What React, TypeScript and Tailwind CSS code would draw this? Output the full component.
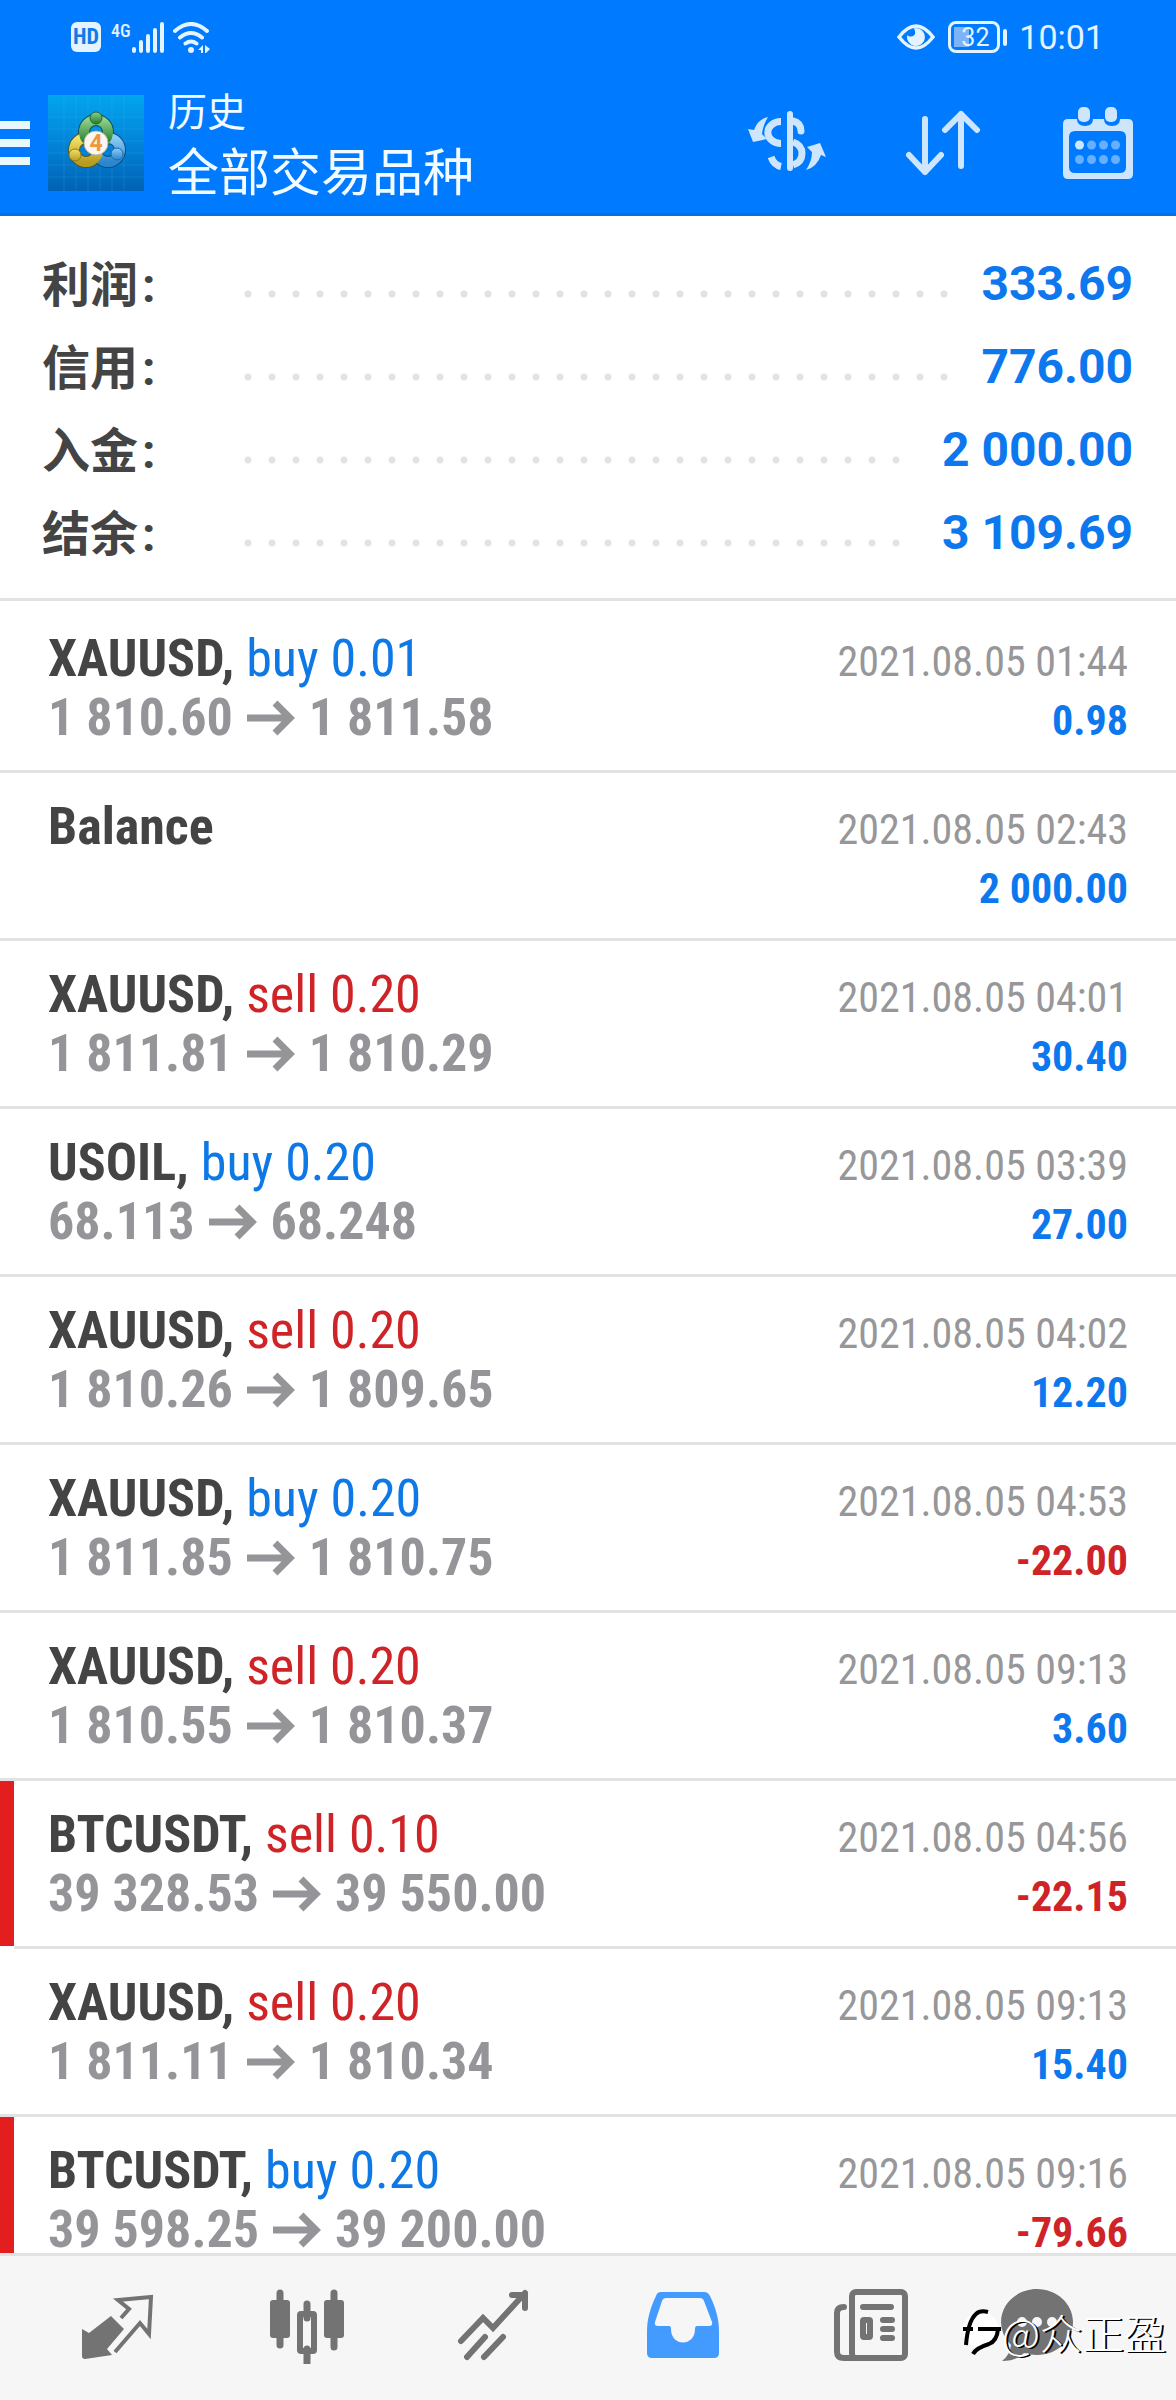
import type { ReactNode } from "react";

type Deal = {
  title: string;
  side?: "buy" | "sell";
  volume?: string;
  from?: string;
  to?: string;
  time: string;
  profit: string;
  marked?: boolean;
};

const summary = [
  { label: "利润", value: "333.69" },
  { label: "信用", value: "776.00" },
  { label: "入金", value: "2 000.00" },
  { label: "结余", value: "3 109.69" },
];

const deals: Deal[] = [
  { title: "XAUUSD", side: "buy", volume: "0.01", from: "1 810.60", to: "1 811.58", time: "2021.08.05 01:44", profit: "0.98" },
  { title: "Balance", time: "2021.08.05 02:43", profit: "2 000.00" },
  { title: "XAUUSD", side: "sell", volume: "0.20", from: "1 811.81", to: "1 810.29", time: "2021.08.05 04:01", profit: "30.40" },
  { title: "USOIL", side: "buy", volume: "0.20", from: "68.113", to: "68.248", time: "2021.08.05 03:39", profit: "27.00" },
  { title: "XAUUSD", side: "sell", volume: "0.20", from: "1 810.26", to: "1 809.65", time: "2021.08.05 04:02", profit: "12.20" },
  { title: "XAUUSD", side: "buy", volume: "0.20", from: "1 811.85", to: "1 810.75", time: "2021.08.05 04:53", profit: "-22.00" },
  { title: "XAUUSD", side: "sell", volume: "0.20", from: "1 810.55", to: "1 810.37", time: "2021.08.05 09:13", profit: "3.60" },
  { title: "BTCUSDT", side: "sell", volume: "0.10", from: "39 328.53", to: "39 550.00", time: "2021.08.05 04:56", profit: "-22.15", marked: true },
  { title: "XAUUSD", side: "sell", volume: "0.20", from: "1 811.11", to: "1 810.34", time: "2021.08.05 09:13", profit: "15.40" },
  { title: "BTCUSDT", side: "buy", volume: "0.20", from: "39 598.25", to: "39 200.00", time: "2021.08.05 09:16", profit: "-79.66", marked: true },
];

function StatusBar() {
  return (
    <div className="flex h-[74px] items-center justify-between pl-[71px] pr-[72px] text-[#e3f3ff]">
      <div className="flex items-center">
        <span className="flex h-[30px] w-[30px] items-center justify-center rounded-md bg-[#e3f3ff] font-['Roboto_Condensed',sans-serif] text-[22px] font-bold leading-none text-[#0f7bea]">
          HD
        </span>
        <span className="ml-[10px] self-start font-['Roboto_Condensed',sans-serif] text-[18px] font-medium leading-[18px]">4G</span>
        <svg className="h-[31px] w-[34px]" viewBox="0 0 34 31" stroke="currentColor" strokeWidth="4" strokeLinecap="round">
          <path d="M3 27v2M10 20v9M17 14v15M24 8v21M31 2v27" />
        </svg>
        <svg className="ml-2 h-[31px] w-[38px]" viewBox="0 0 38 31" fill="none" stroke="currentColor" strokeWidth="4" strokeLinecap="round">
          <path d="M2 9q16-14 32 0M7 15.500q11-9 22 0M12.500 21.500q5.500-4 11 0" />
          <circle cx="18" cy="28" r="3" fill="currentColor" stroke="none" />
          <path d="M30 23v8h-2v-3h-3zM32 23l5 4-4 4h-1z" fill="currentColor" stroke="none" />
        </svg>
      </div>
      <div className="flex items-center">
        <svg className="h-[26px] w-[38px]" viewBox="0 0 38 26" fill="none">
          <path d="M2 13Q19-9 36 13Q19 35 2 13z" stroke="currentColor" strokeWidth="3.500" />
          <path d="M19 4a9 9 0 1 1-8.800 7c3 3 8 1.500 8-2.500q0-2.500-1.500-4z" fill="currentColor" />
        </svg>
        <span className="ml-[13px] flex h-8 w-[52px] items-center rounded-lg border-[3px] border-current p-[3px]">
          <span className="h-full w-[15px] bg-[#7db4f8]" />
          <span className="-ml-2 font-['Roboto',sans-serif] text-[25px] leading-none">32</span>
        </span>
        <span className="ml-[3px] h-[17px] w-1 rounded-sm bg-current" />
        <span className="ml-3 font-['Roboto',sans-serif] text-[34px] leading-none">10:01</span>
      </div>
    </div>
  );
}

function Logo() {
  return (
    <svg className="h-24 w-24" viewBox="0 0 96 96">
      <defs>
        <linearGradient id="tile" x1="0" y1="0" x2="0" y2="1">
          <stop offset="0" stopColor="#02a5ee" />
          <stop offset="0.500" stopColor="#0284d8" />
          <stop offset="1" stopColor="#0162b4" />
        </linearGradient>
        <linearGradient id="green" x1="0" y1="0" x2="0" y2="1">
          <stop offset="0" stopColor="#8ed08a" />
          <stop offset="1" stopColor="#217a2a" />
        </linearGradient>
        <linearGradient id="yellow" x1="0" y1="0" x2="0" y2="1">
          <stop offset="0" stopColor="#f3e26a" />
          <stop offset="1" stopColor="#b89c20" />
        </linearGradient>
        <linearGradient id="blue" x1="0" y1="0" x2="0" y2="1">
          <stop offset="0" stopColor="#8ccdf5" />
          <stop offset="1" stopColor="#2a86cf" />
        </linearGradient>
      </defs>
      <rect width="96" height="96" fill="url(#tile)" />
      <path d="M16 0v96M28 0v96M40 0v96M52 0v96M64 0v96M76 0v96M0 22h96M0 34h96M0 46h96M0 58h96M0 70h96M0 82h96" stroke="#4cb8f5" strokeOpacity="0.200" />
      <circle cx="48" cy="37" r="12" fill="none" stroke="#0f4f55" strokeWidth="12" />
      <circle cx="38" cy="55" r="12" fill="none" stroke="#4f5a20" strokeWidth="12" />
      <circle cx="60" cy="55" r="12" fill="none" stroke="#0b4d85" strokeWidth="12" />
      <circle cx="60" cy="55" r="12" fill="none" stroke="url(#blue)" strokeWidth="10" />
      <circle cx="38" cy="55" r="12" fill="none" stroke="url(#yellow)" strokeWidth="10" />
      <circle cx="48" cy="37" r="12" fill="none" stroke="url(#green)" strokeWidth="10" />
      <circle cx="48" cy="23" r="6" fill="url(#green)" stroke="#1f6a35" />
      <circle cx="27" cy="60" r="6" fill="url(#yellow)" stroke="#8a7a1d" />
      <circle cx="69" cy="59" r="6" fill="url(#blue)" stroke="#1d69a8" />
      <circle cx="48" cy="48" r="12" fill="#fbf6f2" stroke="#b9b7a0" />
      <text x="48" y="56" textAnchor="middle" className="fill-[#f0963c] font-['Roboto',sans-serif] text-[23px] font-bold">4</text>
    </svg>
  );
}

function Header() {
  return (
    <header className="shrink-0 border-b-[3px] border-[#0a6ee0] bg-[#007aff]">
      <StatusBar />
      <div className="flex h-[139px] items-center pb-[2px] pr-[43px]">
        <button type="button" aria-label="menu" className="flex w-[30px] flex-col gap-[10px]">
          <span className="h-2 bg-[#e9f7ff]" />
          <span className="h-2 bg-[#e9f7ff]" />
          <span className="h-2 bg-[#e9f7ff]" />
        </button>
        <div className="ml-[18px]">
          <Logo />
        </div>
        <div className="ml-6 flex-1 text-[#f2fbff]">
          <p className="text-[39px] leading-[52px]">历史</p>
          <h1 className="text-[51px] leading-[68px]">全部交易品种</h1>
        </div>
        <div className="flex items-center text-[#cde6fd]">
          <button type="button" aria-label="currency">
            <svg className="h-[72px] w-[80px]" viewBox="0 0 80 72" fill="none" stroke="currentColor" strokeWidth="6">
              <path d="M43 7v54" strokeLinecap="round" />
              <path d="M34 14.500a12 10 0 0 0 0 22M24 50q3 8 10 9.500" strokeWidth="7" />
              <path d="M46 14q8 2 8 10" strokeWidth="7" strokeLinecap="round" />
              <path d="M46 35q9 3 9 11.500T46 58" strokeWidth="7" />
              <path d="M21 10Q11 12 7 23L1 22l5 13 14-3-5-5q1-9 6-17zM59 63q11-3 15-15l5 2-6-14-13 4 5 5q0 9-6 18z" fill="currentColor" stroke="none" />
            </svg>
          </button>
          <button type="button" aria-label="sort" className="ml-[74px]">
            <svg className="h-[72px] w-[80px]" viewBox="0 0 80 72" fill="none" stroke="currentColor" strokeWidth="6" strokeLinecap="round" strokeLinejoin="round">
              <path d="M24 12v53M8 48l16 17 16-17M60 59V7M44 23L60 7l16 16" />
            </svg>
          </button>
          <button type="button" aria-label="calendar" className="ml-[82px]">
            <svg className="h-[72px] w-[70px]" viewBox="0 0 70 72">
              <path fillRule="evenodd" fill="currentColor" d="M5 12h9q0 7 8 7t8-7h11q0 7 8 7t8-7h8q5 0 5 5v50q0 5-5 5H5q-5 0-5-5V17q0-5 5-5zM12 24q-6 0-6 6v30q0 6 6 6h45q6 0 6-6V30q0-6-6-6z" />
              <rect x="15" y="0" width="12" height="15" rx="5" fill="currentColor" />
              <rect x="42" y="0" width="12" height="15" rx="5" fill="currentColor" />
              <circle cx="16.500" cy="38" r="4.500" fill="currentColor" />
              <g fill="#66b0ff">
                <circle cx="28.500" cy="38" r="4.500" />
                <circle cx="40.500" cy="38" r="4.500" />
                <circle cx="52.500" cy="38" r="4.500" />
                <circle cx="16.500" cy="52.500" r="4.500" />
                <circle cx="28.500" cy="52.500" r="4.500" />
                <circle cx="40.500" cy="52.500" r="4.500" />
                <circle cx="52.500" cy="52.500" r="4.500" />
              </g>
            </svg>
          </button>
        </div>
      </div>
    </header>
  );
}

function Summary() {
  return (
    <dl className="shrink-0 border-b-[3px] border-[#e2e2e2] pb-6 pl-[42px] pr-[43px] pt-[26px]">
      {summary.map((s) => (
        <div key={s.label} className="flex h-[83px] items-center">
          <dt className="w-[194px] text-[48px] font-bold leading-[83px] text-[#444]">
            {s.label}
            <span className="ml-1 font-['Roboto',sans-serif]">:</span>
          </dt>
          <dd className="flex flex-1 items-center">
            <span className="mt-[21px] h-2 flex-1 bg-[radial-gradient(circle,#e2e2e2_3px,transparent_4px)] bg-[length:24px_8px] bg-repeat-x" />
            <span className="ml-8 font-['Roboto',sans-serif] text-[48px] font-bold leading-[83px] text-[#0d78ee]">{s.value}</span>
          </dd>
        </div>
      ))}
    </dl>
  );
}

function DealRow({ deal }: { deal: Deal }) {
  const loss = deal.profit.startsWith("-");

  return (
    <li className="flex h-[168px]">
      <span className={deal.marked ? "mb-[3px] w-[14px] bg-[#e31e1e]" : "w-[14px] border-b-[3px] border-[#e2e2e2]"} />
      <div className="flex-1 border-b-[3px] border-[#e2e2e2] pl-[34px] pr-12 pt-6 font-['Roboto_Condensed',sans-serif] leading-[59px]">
        <div className="flex h-[59px] items-baseline justify-between">
          <h2 className="text-[52px] font-bold text-[#444]">
            {deal.title}
            {deal.side && (
              <>
                ,{" "}
                <span className={deal.side === "buy" ? "font-normal text-[#0d78e6]" : "font-normal text-[#cf2427]"}>
                  {deal.side} {deal.volume}
                </span>
              </>
            )}
          </h2>
          <time className="text-[42px] text-[#979799]">{deal.time}</time>
        </div>
        <div className="flex h-[59px] items-baseline justify-between">
          <p className="flex items-center text-[52px] font-bold text-[#959599]">
            {deal.from ? (
              <>
                {deal.from}
                <svg className="mx-[14px] h-9 w-12" viewBox="0 0 48 36" fill="none" stroke="currentColor" strokeWidth="7">
                  <path d="M0 18h43M28 3l15 15-15 15" />
                </svg>
                {deal.to}
              </>
            ) : (
              "\u00a0"
            )}
          </p>
          <span className={loss ? "text-[42px] font-bold text-[#cf2427]" : "text-[42px] font-bold text-[#0d78ee]"}>{deal.profit}</span>
        </div>
      </div>
    </li>
  );
}

function Tab({ label, active, children }: { label: string; active?: boolean; children: ReactNode }) {
  return (
    <a
      href="#"
      aria-label={label}
      className={
        active
          ? "flex flex-1 justify-center text-[#449bff]"
          : "flex flex-1 justify-center text-[#737373] last:w-[144px] last:flex-none"
      }
    >
      <svg className="h-20 w-20" viewBox="0 0 80 80" fill="none" stroke="currentColor" strokeWidth="6">
        {children}
      </svg>
    </a>
  );
}

function TabBar() {
  return (
    <nav className="relative h-[147px] shrink-0 border-t-[3px] border-[#e2e2e2] bg-[#f6f6f6] pl-6 pr-[66px] pt-7">
      <div className="flex">
        <Tab label="quotes">
          <path d="M33 32l13 13-17 20 5 6-27 4q-3 0-3-3V45l7 4z" fill="currentColor" stroke="none" />
          <path d="M43 34l8-9-11-9 33-3-2 37-9-11-25 29" strokeWidth="4" />
        </Tab>
        <Tab label="chart">
          <path d="M13 9v52M67 9v54M40 20v14M40 65v18" strokeWidth="7" strokeLinecap="round" />
          <rect x="3" y="16" width="20" height="38" rx="3" fill="currentColor" stroke="none" />
          <rect x="57" y="16" width="20" height="38" rx="3" fill="currentColor" stroke="none" />
          <rect x="33" y="30" width="14" height="37" rx="1" />
        </Tab>
        <Tab label="trade">
          <path d="M6 57l22-23 10 10 32-35M57 11h13v13M12 73l18-20M29 73l19-20" strokeLinecap="round" />
        </Tab>
        <Tab label="history" active>
          <path
            d="M18 8h43q4 0 6 4c6 12 9 24 9 35v22q0 5-5 5H9q-5 0-5-5V47c0-11 3-23 9-35q1-4 5-4zM23 14q-3 0-4 3l-7 21q-1 4 3 4h11q2 0 2 3c0 18 24 18 24 0q0-3 2-3h12q4 0 3-4l-8-21q-1-3-4-3z"
            fill="currentColor"
            fillRule="evenodd"
            stroke="none"
          />
        </Tab>
        <Tab label="news">
          <rect x="20" y="8" width="53" height="66" rx="4" />
          <path d="M12 23q-7 0-7 6v39q0 6 7 6h12M31 23h28M51 36h9M51 45h9M51 54h9" strokeLinecap="round" />
          <rect x="31" y="36" width="7" height="17" rx="1" />
        </Tab>
        <Tab label="messages">
          <path d="M39 5C59 5 75 20 75 38S59 71 39 71q-7 0-13-2-8 8-22 8 8-6 9-16-10-10-10-23C3 20 19 5 39 5z" fill="currentColor" stroke="none" />
          <g fill="#f6f6f6" stroke="none">
            <circle cx="24" cy="38" r="5" />
            <circle cx="39" cy="38" r="5" />
            <circle cx="54" cy="38" r="5" />
          </g>
        </Tab>
      </div>
      <div className="absolute bottom-11 right-[10px] flex items-center text-white">
        <svg className="h-12 w-[42px]" viewBox="3 0 42 48" fill="none" strokeWidth="4">
          <circle cx="24" cy="22" r="18" fill="#fff" />
          <path d="M6 21h10M21 21h23M9 37q2-24 10-31 4-4 12-2M41 21q-1 12-9 15-13 4-16 10" stroke="#000" />
        </svg>
        <span className="text-[42px] font-light leading-[48px] [text-shadow:2px_1px_0_#000]">@众正盈</span>
      </div>
    </nav>
  );
}

export default function App() {
  return (
    <div className="flex h-screen flex-col overflow-hidden bg-white font-['Noto_Sans_CJK_SC',sans-serif]">
      <Header />
      <Summary />
      <ul className="min-h-0 flex-1 overflow-y-auto pt-1 [scrollbar-width:none]">
        {deals.map((d, i) => (
          <DealRow key={i} deal={d} />
        ))}
      </ul>
      <TabBar />
    </div>
  );
}
